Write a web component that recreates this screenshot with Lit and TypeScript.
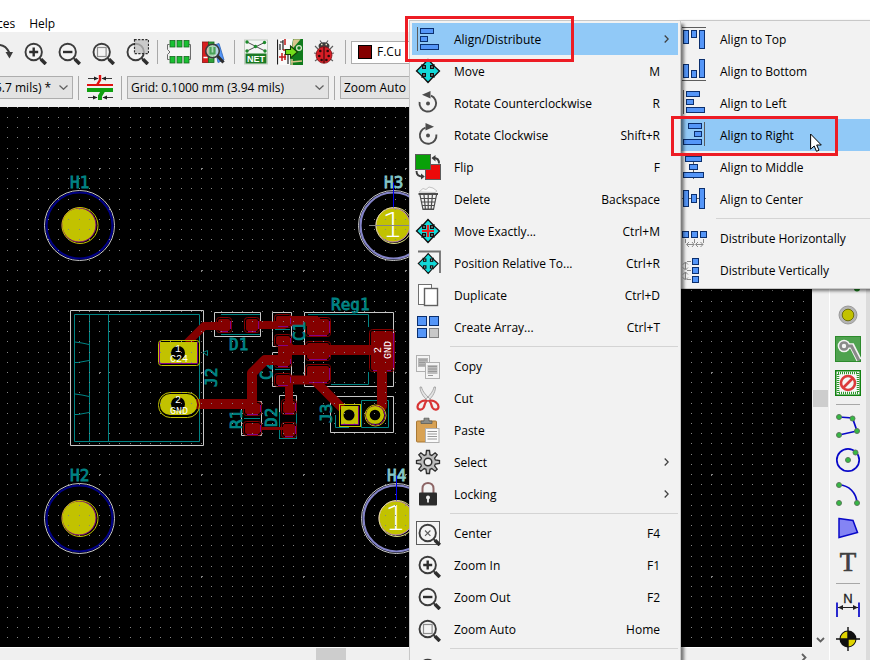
import { LitElement, html, svg, css, nothing, type TemplateResult, type SVGTemplateResult } from "lit";
import { customElement, property } from "lit/decorators.js";
import { classMap } from "lit/directives/class-map.js";

type Frag = SVGTemplateResult;

const lens = svg`
  <circle cx="12.7" cy="13" r="8.2" fill="#f4f4f4" stroke="#3c3c3c" stroke-width="1.9"/>
  <path d="M18.5 19 L20.5 21" stroke="#3c3c3c" stroke-width="1.8"/>
  <path d="M20 20.3 L24.8 25" stroke="#2e2e2e" stroke-width="3.6"/>`;

/* blue bars shared by the alignment icons */
const bars = (...r: number[][]) =>
  svg`${r.map(([x, y, w, h]) => svg`<rect x=${x + 0.5} y=${y + 0.5} width=${w - 1} height=${h - 1} fill="#5596f8" stroke="#0b2f6e"/>`)}`;

const arrows4 = (cross: string) => svg`
  <path d="M13 1.5 L18.3 7 H19 V8 L24.5 13 L19 18.5 V19 H18 L13 24.5 L8 19 H7 V18 L1.5 13 L7 7.5 V7 H8 Z" fill="#12d9d9" stroke="#101010" stroke-width="1.3"/>
  <path d="M13 7 V19 M7 13 H19" stroke=${cross} stroke-width="2.2"/>
  ${[[9, 9], [17, 9], [9, 17], [17, 17]].map(([x, y]) => svg`<rect x=${x - 1.3} y=${y - 1.3} width="2.6" height="2.6" fill="#e8ffff" stroke="#101010" stroke-width="1.4"/>`)}`;

const node = (x: number, y: number) =>
  svg`<circle cx=${x} cy=${y} r="2.5" fill="#35b944" stroke="#5c7a5c" stroke-width="1"/>`;

const gear = () => {
  const pts: string[] = [];
  for (let i = 0; i < 8; i++) {
    const a = (i * Math.PI) / 4;
    for (const [d, r] of [[-0.26, 7.6], [-0.13, 11.6], [0.13, 11.6], [0.26, 7.6]]) {
      pts.push(`${(13 + r * Math.sin(a + d)).toFixed(1)},${(13 - r * Math.cos(a + d)).toFixed(1)}`);
    }
  }
  return pts.join(" ");
};

const icons: Record<string, Frag> = {
  zoomIn: svg`${lens}<path d="M12.7 8.5 V17.5 M8.2 13 H17.2" stroke="#2e2e2e" stroke-width="2.4"/>`,
  zoomOut: svg`${lens}<path d="M8 13 H17.4" stroke="#2e2e2e" stroke-width="2.4"/>`,
  zoomFit: svg`${lens}<rect x="8.5" y="8.5" width="8.6" height="9" fill="none" stroke="#8e8e8e" stroke-width="1.2"/>`,
  lens,
  zoomArea: svg`${lens}<rect x="11.5" y=".7" width="14" height="14" fill="#bdbdbd" fill-opacity=".75" stroke="#2e2e2e" stroke-width="1.2" stroke-dasharray="2.2 1.4"/>`,
  center: svg`<rect x="1.5" y="1.5" width="23" height="23" fill="#f4f4f4" stroke="#5c5c5c"/>${lens}<path d="M10 10.5 L15.4 15.9 M15.4 10.5 L10 15.9" stroke="#5c5c5c" stroke-width="1.1"/>`,
  redo: svg`<path d="M3 13 C6 4.5 17 2.5 22.5 14" fill="none" stroke="#3c3c3c" stroke-width="2"/><path d="M18.5 13 H26 L22.5 19.5 Z" fill="#3c3c3c"/>`,
  footprint: svg`
    <path d="M3.500 5.500 H1.500 V10.500 L4 13 L1.500 15.500 V20.500 H3.500 M22.500 5.500 H24.500 V20.500 H22.500" fill="none" stroke="#6c6c6c"/>
    <rect x="4" y="8" width="19" height="10" fill="#f6f6f6"/>
    ${[4, 11, 18].map((x) => svg`<rect x=${x} y="1.500" width="5" height="6.500" fill="#18c032" stroke="#17691f" stroke-width=".8"/><rect x=${x} y="17.500" width="5" height="6.500" fill="#18c032" stroke="#17691f" stroke-width=".8"/>`)}`,
  library: svg`
    <rect x="2.5" y="3" width="6" height="20.5" fill="#d81e1e" stroke="#8c1010" stroke-width=".8"/>
    <rect x="8.5" y="3" width="5.5" height="20.5" fill="#2ea33a" stroke="#14641c" stroke-width=".8"/>
    <path d="M14.5 6 L19 4.5 L24 21 L18 23.5 Z" fill="#5596f8" stroke="#2a62b8" stroke-width=".8"/>
    <path d="M3.5 18.5 H7.5 M9.5 18.5 H13" stroke="#fff" stroke-width="1.6"/>
    <circle cx="12.5" cy="12" r="6.8" fill="#d6e8dc" fill-opacity=".75" stroke="#3c3c3c" stroke-width="1.6"/>
    <path d="M10.500 8 V14.500 H14.500 V8" fill="none" stroke="#49a258" stroke-width="2.2"/>
    <path d="M17.5 17 L23.5 23.500" stroke="#2e2e2e" stroke-width="3.2"/>`,
  net: svg`
    <rect x="1.5" y="1" width="23" height="24" fill="#f4f6f4" stroke="#c4ccc4"/>
    <rect x="2.5" y="14.5" width="21" height="10" fill="#1c7a24"/>
    <path d="M4 3 L22 12 M4 12 L21.5 3.5" stroke="#3c3c3c" stroke-width=".9"/>
    ${[[4, 3], [21.5, 3.5], [12.5, 7.5], [4, 12], [22, 12]].map(([x, y]) => svg`<circle cx=${x} cy=${y} r="1.7" fill="#1c8a2a"/>`)}
    <text x="13" y="23" text-anchor="middle" font-family="Liberation Sans" font-weight="700" font-size="9" fill="#fff">NET</text>`,
  update: svg`
    <rect x="0" y="0" width="26" height="26" fill="#fafafa"/>
    <path d="M16 0 H26 V26 H13.5 V18 Z" fill="#0f7a1c"/>
    <path d="M17 1 L22 1 L16 8 Z M14 23 L25 22 M15 26 V20" fill="#d8c48c" stroke="#d8c48c" stroke-width="1.5"/>
    <path d="M.5 .5 V25.5 M3 5 V11 M3 3 H6 M6 1 V11 M11 15 V25" stroke="#202020" stroke-width="1.2"/>
    <path d="M6 11 H10 M8 0 V6 M2 18 H9 M5 14 V22 M8 15 V21" stroke="#c01818" stroke-width="1.5"/>
    <circle cx="22" cy="9" r="2.4" fill="#0f7a1c" stroke="#d8e8c8" stroke-width="1.3"/>
    <path d="M8.5 10.5 H13.5 V7 L20.5 13 L13.5 19 V15.5 H8.5 Z" fill="#73dd1c" stroke="#143c08" stroke-width="1.1"/>`,
  bug: svg`
    <path d="M4 7 L8 11 M22 7 L18 11 M3 14 L6 14.5 M23 14 L20 14.5 M4 22 L8 19 M22 22 L18 19 M9 1.5 L11.5 5 M17 1.5 L14.5 5" stroke="#5c5c5c" stroke-width="1.1"/>
    <ellipse cx="13" cy="7" rx="5.5" ry="3.8" fill="#3c3c3c"/>
    <path d="M10 5.5 H11.5 M14.5 5.5 H16" stroke="#e8e0c0" stroke-width="1.6"/>
    <ellipse cx="13" cy="16" rx="8" ry="8.3" fill="#d81e26" stroke="#7c1014" stroke-width=".8"/>
    <path d="M13 8 V24" stroke="#3a0a0a" stroke-width="1.1"/>
    ${[[9.3, 12], [16.7, 12], [8.3, 17], [17.7, 17], [10.6, 21], [15.4, 21]].map(([x, y]) => svg`<circle cx=${x} cy=${y} r="1.3" fill="#2a0a0a"/>`)}`,
  track: svg`
    <path d="M0 10 H26" stroke="#e01010" stroke-width="2"/>
    <path d="M0 15 H26" stroke="#10a010" stroke-width="4"/>
    <path d="M13 0 V5 L10 10" fill="none" stroke="#e01010" stroke-width="2.4"/>
    <path d="M16 16 L13 21 V25" fill="none" stroke="#10a010" stroke-width="4"/>
    <path d="M1 3.5 H11 M15 3.5 H25 M1 22.5 H10 M16 22.5 H26" stroke="#3c3c3c"/>
    <path d="M7 1.5 L11.5 3.5 L7 5.5 Z M19 1.5 L14.5 3.5 L19 5.5 Z M6 20.5 L10.5 22.5 L6 24.5 Z M20 20.5 L15.5 22.5 L20 24.5 Z" fill="#202020"/>`,
  alignMenu: svg`<path d="M2.5 1 V25" stroke="#5c5c5c"/>${bars([5, 2, 14, 6], [5, 10, 8, 6], [5, 18, 19, 6])}`,
  move: arrows4("#12d9d9"),
  moveExactly: arrows4("#f02020"),
  position: svg`<path d="M3 1.5 H25 V23" fill="none" stroke="#707070" stroke-width="1.8"/><g transform="translate(2 2.4) scale(.86)">${arrows4("#12d9d9")}</g>`,
  ccw: svg`<path d="M16 5.6 A8.3 8.3 0 1 1 4.6 12" fill="none" stroke="#4c4c4c" stroke-width="1.9"/><path d="M7 4.8 L15.5 1 V8.5 Z" fill="#4c4c4c"/><circle cx="13" cy="13.5" r="2" fill="#4c4c4c"/>`,
  cw: svg`<path d="M10.5 5.6 A8.3 8.3 0 1 0 21.4 12.5" fill="none" stroke="#4c4c4c" stroke-width="1.9"/><path d="M19 4.8 L10.5 1 V8.5 Z" fill="#4c4c4c"/><circle cx="13" cy="13.5" r="2" fill="#4c4c4c"/>`,
  flip: svg`<rect x="10.5" y="10.5" width="15" height="15" fill="#ec0a0a" stroke="#5c5c5c"/><rect x=".5" y=".5" width="15" height="15" fill="#08a008" stroke="#5c5c5c"/><path d="M19 4 C22.5 4 24 6 24 9.5 M1.5 17 C1.5 21 3.5 22.5 7.5 22.5" fill="none" stroke="#3c3c3c" stroke-width="1.9"/><path d="M16.5 4 L20.5 1 V7.5 Z M9.8 22.5 L6 19.5 V25.5 Z" fill="#3c3c3c"/>`,
  trash: svg`
    <path d="M4 6 L8 2.5 L11 3.5 L14 1 L18 2 L22 5 L20 6.5 Z" fill="#f8f8f8" stroke="#b8b8b8" stroke-width=".8"/>
    <path d="M3.5 7 H23 V9 H3.5 Z" fill="#4c4c4c"/>
    <path d="M5 9 L8 23.5 H18.5 L21.5 9 M9 9 L10.5 24 M13.2 9 V24 M17.4 9 L16 24 M5.5 12.5 H21 M6 16 H20.3 M7 19.5 H19.5 M8 23 H18.5" fill="none" stroke="#4c4c4c" stroke-width="1.2"/>`,
  duplicate: svg`<rect x="3.5" y="2.5" width="13" height="20" fill="#fff" stroke="#707070"/><rect x="9.5" y="6.5" width="13" height="17" fill="#fff" stroke="#606060" stroke-width="1.4"/>`,
  array: svg`${bars([2, 2, 10, 10], [14, 2, 10, 10], [2, 14, 10, 10])}<rect x="14.5" y="14.5" width="9" height="9" fill="#c8c8c8" stroke="#808080"/>`,
  copy: svg`
    <rect x="1.5" y="2.5" width="13" height="16" fill="#f4f4f4" stroke="#b0b0b0"/><rect x="3" y="5" width="10" height="9" fill="#b8b8b8"/>
    <path d="M4 7 H12 M4 9.5 H12 M4 12 H12" stroke="#989898"/>
    <rect x="10.5" y="9.5" width="14" height="16" fill="#f4f4f4" stroke="#b0b0b0"/><rect x="12.5" y="12" width="10" height="9" fill="#bdbdbd"/>
    <path d="M13 13.5 H22 M13 16 H22 M13 18.5 H22 M13 22.5 H18" stroke="#989898"/>`,
  cut: svg`
    <path d="M5 2 C5 8 10 14 14.5 17 L16 15 C12 11 7.5 7 6.5 2 Z M20.5 2 C20.5 8 16 14 11.5 17 L10 15 C14 11 18 7 19 2 Z" fill="#e4e4e4" stroke="#989898" stroke-width=".8"/>
    <path d="M11.500 16 C7 14.500 2.500 18.500 2.500 21.800 C2.500 25.300 7 25.300 8.500 22.800 C10 20 9.500 18 11.500 16 Z M14.500 16 C19 14.500 23.500 18.500 23.500 21.800 C23.500 25.300 19 25.300 17.500 22.800 C16 20 16.500 18 14.500 16 Z" fill="#f0f0f0" stroke="#d83434" stroke-width="2.2"/>`,
  paste: svg`
    <rect x="1.5" y="4" width="20" height="21" rx="1" fill="#d8a254" stroke="#a87834"/>
    <path d="M6 6.5 V4 H9 V1.2 H14 V4 H17 V6.5 Z" fill="#8a8c88" stroke="#5c5e5a" stroke-width=".8"/>
    <rect x="10.5" y="11.5" width="13.5" height="14" fill="#fafafa" stroke="#b0b0b0"/>
    <path d="M12.5 14.500 H22 M12.5 17 H22 M12.5 19.500 H22 M12.5 22 H22" stroke="#989898"/>`,
  gear: svg`<polygon points=${gear()} fill="#bcbcbc" stroke="#2e2e2e" stroke-width="1.3"/><circle cx="13" cy="13" r="3.8" fill="#f4f4f4" stroke="#2e2e2e" stroke-width="1.5"/>`,
  lock: svg`
    <path d="M7.5 12 V7.5 C7.5 0 18.5 0 18.5 7.5 V12" fill="none" stroke="#8c6464" stroke-width="2"/>
    <rect x="4" y="11.5" width="18" height="13" rx="1" fill="#2c2c2c"/>
    <circle cx="13" cy="16.5" r="2" fill="#f0f0f0"/><path d="M13 17 V21.5" stroke="#f0f0f0" stroke-width="1.8"/>`,
  alTop: svg`<path d="M0 1.5 H24" stroke="#5c5c5c"/>${bars([1, 4, 6, 14], [9, 4, 6, 8], [17, 4, 6, 19])}`,
  alBottom: svg`<path d="M0 22.5 H24" stroke="#5c5c5c"/>${bars([1, 6, 6, 14], [9, 12, 6, 8], [17, 1, 6, 19])}`,
  alLeft: svg`<path d="M1.5 0 V24" stroke="#5c5c5c"/>${bars([4, 1, 14, 6], [4, 9, 8, 6], [4, 17, 19, 6])}`,
  alRight: svg`<path d="M22.5 0 V24" stroke="#5c5c5c"/>${bars([6, 1, 14, 6], [12, 9, 8, 6], [1, 17, 19, 6])}`,
  alMiddle: svg`<path d="M11.5 1 V25" stroke="#5c5c5c"/>${bars([3, 2, 17, 6], [7, 10, 9, 6], [1, 18, 21, 6])}`,
  alCenter: svg`<path d="M0 12.5 H24" stroke="#5c5c5c"/>${bars([1, 4, 6, 17], [9, 8, 6, 9], [17, 2, 6, 21])}`,
  distH: svg`${bars([0, 6, 7, 7], [9, 6, 7, 7], [18, 6, 7, 7])}<path d="M3.5 14 V18 M12.5 14 V18 M21.5 14 V18 M5 19.5 H12 M14 19.5 H21 M7 17 L4.5 19.5 L7 22 M10 17 L12 19.5 L10 22 M16 17 L13.5 19.5 L16 22 M18.5 17 L21 19.5 L18.5 22" fill="none" stroke="#8a8a8a"/>`,
  distV: svg`${bars([10, 1, 7, 7], [10, 10, 7, 7], [10, 19, 7, 7])}<path d="M9 4.500 H5 M9 13.500 H5 M9 22.500 H5 M3.500 5 V12 M3.500 15 V22 M1 7.500 L3.500 5 L6 7.500 M1 10.500 L3.500 13 L6 10.500 M1 17.500 L3.500 15 L6 17.500 M1 20.500 L3.500 23 L6 20.500" fill="none" stroke="#8a8a8a"/>`,
  route: svg`<path d="M4 4 V16 L20 20" fill="none" stroke="#1c8a1c" stroke-width="2"/><circle cx="22" cy="20.500" r="3" fill="#18801c"/>`,
  via: svg`<circle cx="13" cy="13" r="7.3" fill="#c2c200" stroke="#b4b4b4" stroke-width="3.2"/><circle cx="13" cy="13" r="5.8" fill="#c2c200" stroke="#6e6e10"/><circle cx="13" cy="13" r="9" fill="none" stroke="#8a8a8a" stroke-width=".8"/>`,
  zone: svg`<rect x=".5" y=".5" width="25" height="25" fill="#4fa24f" stroke="#2c8a2c"/><path d="M9 10 H17 L24 24" fill="none" stroke="#f4f4f4" stroke-width="5.500"/><circle cx="9" cy="10" r="6.300" fill="#f4f4f4"/><path d="M9 10 H16.500 L24 24.500" fill="none" stroke="#8a8a8a" stroke-width="3"/><circle cx="9" cy="10" r="3.500" fill="#f4f4f4" stroke="#8a8a8a" stroke-width="2.600"/>`,
  keepout: svg`<rect x=".75" y=".75" width="24.500" height="24.500" fill="#f6f6f6" stroke="#108010" stroke-width="1.500"/><rect x="3" y="3" width="20" height="20" fill="none" stroke="#2c9a2c" stroke-width="2.600" stroke-dasharray="1 1"/><circle cx="13" cy="13" r="7" fill="#f6f6f6" stroke="#dc3c3c" stroke-width="2.600"/><path d="M8.500 17.500 L17.500 8.500" stroke="#dc3c3c" stroke-width="2.600"/>`,
  polyline: svg`<path d="M4 4 L17.500 5 L22 18 L4 22" fill="none" stroke="#0808c8" stroke-width="1.700"/>${node(4, 4)}${node(17.5, 5.5)}${node(22, 18)}${node(4, 22)}`,
  circle: svg`<circle cx="13" cy="13" r="11.200" fill="none" stroke="#0808c8" stroke-width="1.700"/>${node(13, 13)}${node(20.5, 5.500)}`,
  arc: svg`<path d="M4 4 C14 4 21.500 12 22 22" fill="none" stroke="#0808c8" stroke-width="1.700"/>${node(4, 4)}${node(22, 22)}${node(4, 22)}`,
  polygon: svg`<path d="M4 3.500 L18 5.500 L22.500 17.500 L4 22.500 Z" fill="#8484f4" stroke="#0808c8" stroke-width="1.500"/>`,
  text: svg`<path d="M4.500 4 H21.500 V9 H20 L19 6 H14.800 V21.200 L17.500 22 V23 H8.500 V22 L11.200 21.200 V6 H7 L6 9 H4.500 Z" fill="#404040"/>`,
  dimension: svg`<path d="M2 10.500 V25 M24 10.500 V25" stroke="#0808c8" stroke-width="1.700"/><path d="M3 15.500 H23" stroke="#202020"/><path d="M3 15.500 L8 13 V18 Z M23 15.500 L18 13 V18 Z" fill="#202020"/><text x="13" y="11" text-anchor="middle" font-family="Liberation Sans" font-size="13" fill="#202020" stroke="#202020" stroke-width=".3">N</text>`,
  origin: svg`<circle cx="13" cy="13" r="8.500" fill="#101010"/><path d="M13 13 V5.500 A7.500 7.500 0 0 1 20.500 13 Z M13 13 V20.500 A7.500 7.500 0 0 1 5.500 13 Z" fill="#e0d400" transform="rotate(-90 13 13)"/><path d="M13 1 V25 M1 13 H25" stroke="#101010" stroke-width="1.400"/>`,
};

/* the text tool's glyph is live text, sized to stay inside its button */
icons.text = svg`<text x="13" y="22" text-anchor="middle" font-family="Liberation Serif" font-size="27" fill="#404040" stroke="#404040" stroke-width=".7">T</text>`;

const icon = (name: string): TemplateResult =>
  html`<svg class="icon" viewBox="0 0 26 26" aria-hidden="true">${icons[name]}</svg>`;

interface Entry { label: string; icon: string; key?: string; sub?: boolean; active?: boolean }

const mainMenu: Entry[][] = [
  [
    { label: "Align/Distribute", icon: "alignMenu", sub: true, active: true },
    { label: "Move", icon: "move", key: "M" },
    { label: "Rotate Counterclockwise", icon: "ccw", key: "R" },
    { label: "Rotate Clockwise", icon: "cw", key: "Shift+R" },
    { label: "Flip", icon: "flip", key: "F" },
    { label: "Delete", icon: "trash", key: "Backspace" },
    { label: "Move Exactly...", icon: "moveExactly", key: "Ctrl+M" },
    { label: "Position Relative To...", icon: "position", key: "Ctrl+R" },
    { label: "Duplicate", icon: "duplicate", key: "Ctrl+D" },
    { label: "Create Array...", icon: "array", key: "Ctrl+T" },
  ],
  [
    { label: "Copy", icon: "copy" },
    { label: "Cut", icon: "cut" },
    { label: "Paste", icon: "paste" },
    { label: "Select", icon: "gear", sub: true },
    { label: "Locking", icon: "lock", sub: true },
  ],
  [
    { label: "Center", icon: "center", key: "F4" },
    { label: "Zoom In", icon: "zoomIn", key: "F1" },
    { label: "Zoom Out", icon: "zoomOut", key: "F2" },
    { label: "Zoom Auto", icon: "zoomFit", key: "Home" },
  ],
  [{ label: "", icon: "lens" }],
];

const alignMenu: Entry[][] = [
  [
    { label: "Align to Top", icon: "alTop" },
    { label: "Align to Bottom", icon: "alBottom" },
    { label: "Align to Left", icon: "alLeft" },
    { label: "Align to Right", icon: "alRight", active: true },
    { label: "Align to Middle", icon: "alMiddle" },
    { label: "Align to Center", icon: "alCenter" },
  ],
  [
    { label: "Distribute Horizontally", icon: "distH" },
    { label: "Distribute Vertically", icon: "distV" },
  ],
];

@customElement("popup-menu")
class PopupMenu extends LitElement {
  @property({ attribute: false }) groups: Entry[][] = [];

  static styles = css`
    :host { display: block; box-sizing: border-box; padding: 2px; border: 1px solid #c8c8c8; background: #f2f2f2; }
    .group + .group::before { content: ""; display: block; height: 1px; margin: 3px 0 3px var(--rule-inset, 38px); background: #d4d4d4; }
    button {
      display: flex; align-items: center; width: 100%; height: 32px; margin: 0; border: 0;
      padding: 0 18px 0 var(--icon-inset, 3px); background: none; color: #000; text-align: left;
      font: 12px/16px "Open Sans", "Noto Sans", sans-serif;
    }
    .active { background: #91c9f7; }
    .icon { flex: none; width: 26px; height: 26px; margin-right: var(--icon-gap, 13px); }
    .label { flex: 1; padding-top: 1px; white-space: nowrap; }
    .key { padding-top: 1px; }
    .arrow { flex: none; width: 5px; height: 8px; margin-right: -9px; fill: none; stroke: #404040; stroke-width: 1.3; }
  `;

  render() {
    return html`<div role="menu">
      ${this.groups.map((g) => html`<div class="group" role="group">
        ${g.map((e) => html`<button role="menuitem" class=${classMap({ active: !!e.active })}>
          ${icon(e.icon)}<span class="label">${e.label}</span>
          ${e.key ? html`<span class="key">${e.key}</span>` : nothing}
          ${e.sub ? html`<svg class="arrow" viewBox="0 0 5 8" aria-hidden="true"><path d="M.7 .5 L4.200 4 L.7 7.500"/></svg>` : nothing}
        </button>`)}
      </div>`)}
    </div>`;
  }
}

/* one tile of the 10 x 10 grid; its origin dot is drawn larger */
const gridDots = (() => {
  let d = "M0 0h2v1h-1v1h-1z";
  for (let i = 0; i < 10; i++)
    for (let j = 0; j < 10; j++) d += `M${Math.round(i * 10.2)} ${Math.round(j * 10.2)}h1v1h-1z`;
  return d;
})();

@customElement("pcb-canvas")
class PcbCanvas extends LitElement {
  static styles = css`
    :host { display: block; background: #000; overflow: hidden; }
    .board { display: block; width: 100%; height: 100%; }
    .silk { fill: none; stroke: #008484; }
    .yard { fill: none; stroke: #c8c8c8; }
    .copper { fill: none; stroke: #840000; stroke-linejoin: round; }
    .smd { fill: #840000; }
    .clear { fill: none; stroke: #840000; }
    .mask { fill: none; stroke: #840084; }
    .thru { fill: #c2c200; }
    .ring { fill: none; stroke: #c2c200; }
    .name { font: 16px "DejaVu Sans Mono", monospace; fill: #008484; stroke: #008484; stroke-width: .8; }
    .name.on { fill: #84c8c8; stroke: #84c8c8; }
    .net { font: 10px "Liberation Mono", monospace; fill: #fff; text-anchor: middle; }
    .num { font: 200 33px "DejaVu Sans", sans-serif; fill: #fff; text-anchor: middle; }
  `;

  private hole(cx: number, cy: number, label: string, on: boolean) {
    return svg`
      <circle class="yard" cx=${cx} cy=${cy} r="35"/>
      <circle cx=${cx} cy=${cy} r="33" fill="none" stroke=${on ? "#8484c8" : "#000084"} stroke-width="2.200"/>
      <circle class="thru" cx=${cx - 0.5} cy=${cy - 0.5} r="17"/>
      <circle cx=${cx - 0.5} cy=${cy - 0.5} r="17" fill="none" stroke=${on ? "#c284c2" : "#840084"}/>
      <circle cx=${cx + 0.5} cy=${cy} r="18" fill="none" stroke=${on ? "#e0e084" : "#c2c200"}/>
      <text class=${on ? "name on" : "name"} x=${cx - 9.5} y=${cy - 37.5}>${label}</text>
      ${on ? svg`<path d="M${cx} ${cy - 43} V${cy - 18}" stroke="#0000f0"/><text class="num" x=${cx - 1} y=${cy + 11}>1</text>` : nothing}`;
  }

  private smd(x: number, y: number, w: number, h: number) {
    return svg`
      <rect class="clear" x=${x + 0.5} y=${y + 0.5} width=${w - 1} height=${h - 1} rx="3"/>
      <rect class="smd" x=${x + 2} y=${y + 2} width=${w - 4} height=${h - 4} rx="2"/>
      <path class="mask" d="M${x + 4} ${y + h - 1.500} H${x + w - 4} M${x + w - 1.500} ${y + 4} V${y + h - 4}"/>`;
  }

  render() {
    const s = (x: number, y: number, w: number, h: number) => this.smd(x, y, w, h);
    return html`<svg class="board" role="img" aria-label="Board">
      <defs><pattern id="grid" x="99" y="61" width="102" height="102" patternUnits="userSpaceOnUse">
        <path d=${gridDots} fill="#848484" shape-rendering="crispEdges"/>
      </pattern></defs>
      <g transform="translate(0 -107)">
        ${this.hole(79.5, 225.5, "H1", false)}
        ${this.hole(79.5, 518.5, "H2", false)}
        ${this.hole(393.5, 225.5, "H3", true)}
        ${this.hole(396.500, 518.5, "H4", true)}
        <path d="M369 225.500 H420" stroke="#848484"/>

        <path class="yard" d="M70.500 310.500 H203.500 V445.500 H70.500 Z M214.500 312.500 H260.500 V336.500 H214.500 Z M272.500 312.500 H291.500 V346.500 H272.500 Z M272.500 352.500 H291.500 V386.500 H272.500 Z M304.500 312.500 H393.500 V386.500 H304.500 Z M241.500 401.500 H261.500 V435.500 H241.500 Z M279.500 395.500 H296.500 V438.500 H279.500 Z M330.500 396.500 H393.500 V432.500 H330.500 Z"/>
        <path class="silk" d="M74.500 314.500 H199.500 V441.500 H74.500 Z M89.500 314 V441 M108.500 314 V441 M75 342 L82 343 L89 344.500 M75 362.500 H78 L89 360.500 M75 394 L82 395 L89 396.500 M75 414.500 H78 L89 412.500 M221 314.500 H260 M221 334.500 H260 M308 314.500 H368.500 V327 M368.500 372 V384.500 H331 M335.500 415 V427.500 H349 M361.500 400.500 H388.500 V427.500 H361.500 Z M244 418.500 H260 M275 329.500 H290 M275 369.500 H290 M279.500 412 V438.500 H296.500 V412 M203 352.500 L207.500 350.500 V355.500 Z"/>
        <g class="name"><text transform="translate(272 380) rotate(-90)">C2</text></g>

        <g class="copper">
          <path stroke-width="8" d="M187 343 L204 326 H224 M252 325 H284 L290 321 H320"/>
          <path stroke-width="10" d="M277 321 H318"/>
          <path stroke-width="10" d="M194 404 H252 V373 L265 360 H284"/>
          <path stroke-width="10" d="M284 342 L291 350 H374 M252 400 V408"/>
          <path stroke-width="14" d="M285 338 V362"/>
          <path stroke-width="9" d="M282 380 H314 L342 408"/>
          <path stroke-width="8" d="M289 380 V408"/>
          <path stroke-width="10" d="M382 366 V406 L377 412"/>
          <path stroke-width="3" d="M254 428.500 H288"/>
        </g>
        ${s(216, 317, 16, 16)}${s(244, 317, 16, 16)}
        ${s(274, 314, 18, 14)}${s(274, 334, 18, 13)}${s(274, 355, 18, 13)}${s(274, 373, 18, 14)}
        ${s(305, 317, 26, 20)}${s(305, 341, 26, 20)}${s(305, 364, 26, 20)}
        ${s(369, 329, 26, 43)}
        ${s(243, 401, 19, 15)}${s(243, 421, 19, 15)}
        ${s(281, 399, 16, 16)}${s(281, 422, 16, 16)}
        <path class="copper" stroke-width="10" d="M320 350 H376 M382 364 V376"/>

        <g class="name">
          <text x="229" y="350">D1</text>
          <text x="331" y="310">Reg1</text>
          <text transform="translate(217 387) rotate(-90)">J2</text>
          <text transform="translate(305 341) rotate(-90)">C1</text>
          <text transform="translate(242 429) rotate(-90)">R1</text>
          <text transform="translate(277 427) rotate(-90)">D2</text>
          <text transform="translate(332 423) rotate(-90)">J3</text>
        </g>

        <rect class="ring" x="158.500" y="340.500" width="41" height="25" rx="3"/>
        <rect class="thru" x="160" y="342" width="37" height="21"/>
        <path class="mask" d="M159.500 342 V363.500 H197.500 V342"/>
        <rect class="ring" x="158.500" y="392.500" width="41" height="25" rx="12"/>
        <rect class="thru" x="160" y="394" width="37" height="21" rx="10"/>
        <circle cx="178" cy="353" r="7"/><circle cx="178" cy="404" r="7"/>
        <text class="net" x="178" y="352">1</text><text class="net" x="179" y="362">C24</text>
        <text class="net" x="178" y="403">2</text><text class="net" x="179" y="414">GND</text>
        <g transform="translate(381 350) rotate(-90)"><text class="net">2</text></g>
        <g transform="translate(391 350) rotate(-90)"><text class="net">GND</text></g>

        <rect class="ring" x="339.500" y="404.500" width="21" height="22"/>
        <rect class="thru" x="341" y="406" width="17" height="18"/>
        <path class="mask" d="M341 424.500 H358.500 V406"/>
        <circle cx="349" cy="415" r="5.500"/>
        <circle class="ring" cx="375.500" cy="415.500" r="10.500"/>
        <circle class="mask" cx="375.500" cy="415.500" r="9.500"/>
        <circle cx="375" cy="415" r="7.200" fill="#000" stroke="#c2c200" stroke-width="3.800"/>
      </g>
      <rect width="100%" height="100%" fill="url(#grid)" pointer-events="none"/>
    </svg>`;
  }
}

@customElement("app-root")
class AppRoot extends LitElement {
  static styles = css`
    :host {
      display: flex; flex-direction: column; position: relative; height: 100vh; overflow: hidden;
      background: #f0f0f0; color: #000; font: 12px/16px "Open Sans", "Noto Sans", sans-serif;
    }
    .menubar { display: flex; align-items: flex-end; flex: none; gap: 14px; height: 32px; margin-left: -3px; background: #fff; }
    .menubar button { margin: 0; padding: 0; border: 0; background: none; font: inherit; color: inherit; }
    .bar { display: flex; align-items: center; flex: none; height: 40px; }
    .bar.first { margin-left: -17px; }
    .bar.second { height: 35px; align-items: flex-start; padding-top: 4px; box-sizing: border-box; }
    .tool { display: flex; flex: none; align-items: center; justify-content: center; width: 34px; height: 34px; padding: 0; border: 0; background: none; }
    .icon { width: 26px; height: 26px; flex: none; }
    .sep { flex: none; width: 1px; height: 24px; margin: 0 4px; background: #a8a8a8; }
    .second .sep { margin: 0 5px; }
    .second .tool { height: 23px; width: 32px; }
    .combo { display: flex; align-items: center; position: relative; box-sizing: border-box; height: 23px; border: 1px solid #adadad; background: #e3e3e3; flex: none; }
    .combo select { appearance: none; width: 100%; height: 100%; margin: 0; padding: 0 3px; border: 0; background: none; color: #000; font: inherit; }
    .chev { position: absolute; right: 4px; width: 9px; height: 5px; fill: none; stroke: #606060; stroke-width: 1.2; pointer-events: none; }
    .track { width: 82px; margin-left: -9px; }
    .grid { width: 202px; }
    .zoom { width: 150px; }
    .layer { width: 170px; margin-left: 1px; background: #fff; }
    .swatch { flex: none; box-sizing: border-box; width: 14px; height: 14px; margin-left: 6px; border: 1px solid #000; background: #840000; }
    .layer select { padding-left: 5px; }
    .work { display: flex; flex: 1; min-height: 0; }
    .view { display: grid; flex: 1; min-width: 0; grid-template-columns: 1fr 17px; grid-template-rows: 1fr 12px; }
    pcb-canvas { min-height: 0; border-bottom: 1px solid #fff; }
    .vbar { display: flex; flex-direction: column; justify-content: space-between; align-items: center; }
    .vthumb { width: 15px; height: 17px; margin-top: 283px; background: #cdcdcd; }
    .hbar { display: flex; justify-content: space-between; align-items: center; }
    .hthumb { width: 30px; height: 12px; margin-left: 316px; background: #cdcdcd; }
    .mark { fill: none; stroke: #606060; stroke-width: 1.8; }
    .mark.down { width: 9px; height: 6px; margin-bottom: 5px; }
    .mark.right { width: 6px; height: 9px; margin-right: 5px; margin-top: 6px; }
    .rail { display: flex; flex-direction: column; align-items: center; flex: none; width: 36px; padding-top: 157px; border-left: 1px solid #fff; border-right: 4px solid #dcdcdc; }
    .rail .sep { width: 24px; height: 1px; margin: 4px 0; }
    popup-menu { position: absolute; top: 20px; }
    .context { left: 409px; width: 272px; z-index: 3; box-shadow: 3px 4px 3px rgba(0, 0, 0, .5); }
    .align { left: 678px; width: 230px; z-index: 2; --icon-inset: 1px; --icon-gap: 12px; --rule-inset: 35px; box-shadow: 2px 2px 3px rgba(0, 0, 0, .5); }
    .callout { position: absolute; z-index: 4; box-sizing: border-box; border: 3px solid #ed1c24; pointer-events: none; }
    .callout.one { left: 405px; top: 16px; width: 169px; height: 46px; }
    .callout.two { left: 671px; top: 116px; width: 167px; height: 40px; }
    .cursor { position: absolute; z-index: 5; left: 810px; top: 133px; width: 12px; height: 19px; pointer-events: none; }
  `;

  private tool(name: string) {
    return html`<button class="tool" aria-label=${name}>${icon(name)}</button>`;
  }

  private combo(cls: string, text: string, label: string) {
    return html`<div class="combo ${cls}">
      ${cls === "layer" ? html`<span class="swatch"></span>` : nothing}
      <select aria-label=${label}><option>${text}</option></select>
      <svg class="chev" viewBox="0 0 9 5" aria-hidden="true"><path d="M.5 .5 L4.500 4.300 L8.500 .5"/></svg>
    </div>`;
  }

  render() {
    const sep = html`<span class="sep"></span>`;
    const t = (n: string) => this.tool(n);
    return html`
      <nav class="menubar"><button>ces</button><button>Help</button></nav>
      <div class="bar first">
        ${["redo", "zoomIn", "zoomOut", "zoomFit", "zoomArea"].map(t)}${sep}
        ${["footprint", "library"].map(t)}${sep}
        ${["net", "update", "bug"].map(t)}${sep}
        ${this.combo("layer", "F.Cu", "Layer")}
      </div>
      <div class="bar second">
        ${this.combo("track", "5.7 mils) *", "Track")}${sep}
        ${t("track")}${sep}
        ${this.combo("grid", "Grid: 0.1000 mm (3.94 mils)", "Grid")}${sep}
        ${this.combo("zoom", "Zoom Auto", "Zoom")}
      </div>
      <div class="work">
        <div class="view">
          <pcb-canvas></pcb-canvas>
          <div class="vbar"><span class="vthumb"></span><svg class="mark down" viewBox="0 0 9 6"><path d="M1 1 L4.500 4.500 L8 1"/></svg></div>
          <div class="hbar"><span class="hthumb"></span><svg class="mark right" viewBox="0 0 6 9"><path d="M1 1 L4.500 4.500 L1 8"/></svg></div>
        </div>
        <div class="rail">
          ${["route", "via", "zone", "keepout"].map(t)}${sep}
          ${["polyline", "circle", "arc", "polygon", "text"].map(t)}${sep}
          ${["dimension", "origin"].map(t)}
        </div>
      </div>
      <popup-menu class="context" .groups=${mainMenu}></popup-menu>
      <popup-menu class="align" .groups=${alignMenu}></popup-menu>
      <div class="callout one"></div>
      <div class="callout two"></div>
      <svg class="cursor" viewBox="0 0 12 19" aria-hidden="true"><path d="M.6 1 V16.200 L4.200 13 L6.500 18.300 L9 17.200 L6.700 12 H11.300 Z" fill="#fff" stroke="#000" stroke-width="1"/></svg>
    `;
  }
}
